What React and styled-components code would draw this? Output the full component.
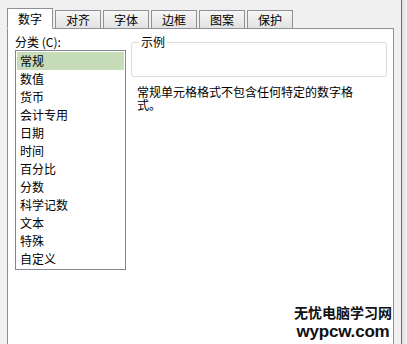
import styled, { createGlobalStyle } from "styled-components";

const Global = createGlobalStyle`
 html, body { margin:0; padding:0; }
 body {
  background:#f0f0f0;
  font-family: "Noto Sans CJK SC", "Liberation Sans", sans-serif;
  font-size:12px;
  color:#000;
 }
`
const Window = styled.div`
 width:407px;
 height:344px;
 display:flex;
 overflow:hidden;
 position:relative;
 background:#f0f0f0;
`
const Main = styled.div`
 width:394px;
 padding:8px 0 0 7px;
 box-sizing:border-box;
 display:flex;
 flex-direction:column;
 flex-shrink:0;
`
const Gutter = styled.div`
 width:7px;
 background:#f0f0f0;
 flex-shrink:0;
`
const Frame = styled.div`
 width:1px;
 background:#6d6d6d;
 flex-shrink:0;
`
const Edge = styled.div`
 flex:1;
 background:linear-gradient(to right,#dcdcdc,#f4f4f4);
`
const TabRow = styled.div`
 display:flex;
 gap:2px;
 align-items:flex-end;
 height:20px;
 position:relative;
 z-index:1;
`
const Tab = styled.div`
 width:46px;
 height:${p => p.$active ? "21px" : "18px"};
 box-sizing:border-box;
 border:1px solid #8e9096;
 border-bottom:${p => p.$active ? "1px solid #fff" : "none"};
 margin-bottom:${p => p.$active ? "-1px" : "0"};
 background:${p => p.$active ? "#fff" : "linear-gradient(#f6f6f6,#e2e2e2)"};
 display:flex;
 align-items:center;
 justify-content:center;
 font-size:12px;
 line-height:1;
`
const Panel = styled.div`
 flex:1;
 background:#fff;
 border:1px solid #8e9096;
 border-bottom:none;
 display:flex;
 padding:6px 0 0 7px;
 gap:5px;
`
const LeftCol = styled.div`
 width:111px;
 display:flex;
 flex-direction:column;
`
const Label = styled.div`
 height:14px;
 line-height:14px;
 font-size:12px;
 margin-bottom:1px;
 white-space:pre;
`
const ListBox = styled.div`
 height:220px;
 border:1px solid #828790;
 box-sizing:border-box;
 padding:1px;
 display:flex;
 flex-direction:column;
`
const Item = styled.div`
 height:18px;
 line-height:18px;
 padding-left:3px;
 font-size:12px;
 background:${p => p.$selected ? "#c7ddb9" : "transparent"};
`
const RightCol = styled.div`
 width:256px;
 display:flex;
 flex-direction:column;
`
const Sample = styled.fieldset`
 margin:0;
 padding:0;
 border:1px solid #dcdcdc;
 border-radius:3px;
 box-sizing:border-box;
 height:42px;
`
const Legend = styled.legend`
 padding:0 2px;
 margin-left:7px;
 font-size:12px;
 line-height:14px;
`
const Desc = styled.div`
 width:222px;
 margin:8px 0 0 6px;
 font-size:12px;
 line-height:13px;
`
const Watermark = styled.div`
 position:absolute;
 left:294px;
 top:302px;
 display:flex;
 flex-direction:column;
 align-items:center;
 font-weight:bold;
 color:#111;
 text-shadow:0 0 2px #fff, 0 0 2px #fff;
`
const MarkCn = styled.span`
 font-size:14px;
 line-height:20px;
 font-family:"Noto Sans CJK SC", sans-serif;
`
const MarkEn = styled.span`
 font-size:17px;
 line-height:19px;
 font-family:"Liberation Sans", Arial, sans-serif;
 letter-spacing:-0.2px;
`

const tabs = ["数字", "对齐", "字体", "边框", "图案", "保护"];
const items = ["常规", "数值", "货币", "会计专用", "日期", "时间", "百分比", "分数", "科学记数", "文本", "特殊", "自定义"];

export default function App(){
    return (
        <Window>
         <Global />
         <Main>
          <TabRow>
           {tabs.map((t, i) => <Tab key={t} $active={i === 0}>{t}</Tab>)}
          </TabRow>
          <Panel>
           <LeftCol>
            <Label>分类 (C):</Label>
            <ListBox>
             {items.map((t, i) => <Item key={t} $selected={i === 0}>{t}</Item>)}
            </ListBox>
           </LeftCol>
           <RightCol>
            <Sample>
             <Legend>示例</Legend>
            </Sample>
            <Desc>常规单元格格式不包含任何特定的数字格式。</Desc>
           </RightCol>
          </Panel>
         </Main>
         <Gutter />
         <Frame />
         <Edge />
         <Watermark>
          <MarkCn>无忧电脑学习网</MarkCn>
          <MarkEn>wypcw.com</MarkEn>
         </Watermark>
        </Window>
    )
}
